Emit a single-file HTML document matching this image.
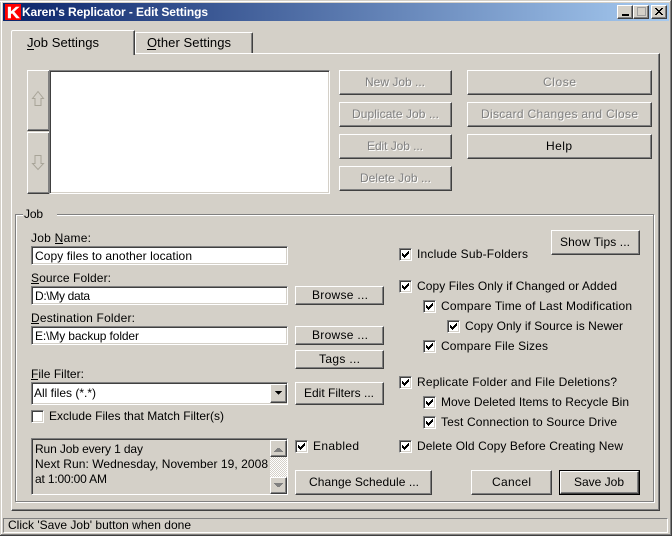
<!DOCTYPE html>
<html><head><meta charset="utf-8"><style>
html,body{margin:0;padding:0;width:672px;height:536px;overflow:hidden;background:#d4d0c8}
svg{display:block;position:absolute;left:0;top:0}
text{font-family:"Liberation Sans",sans-serif;font-size:12px;fill:#000;white-space:pre}
.d{fill:#808080}
.w{fill:#fff}
.b{position:absolute;box-sizing:border-box;background:#d4d0c8;border:1px solid;border-color:#fff #404040 #404040 #fff;box-shadow:inset -1px -1px #808080}
.i{position:absolute;box-sizing:border-box;background:#fff;border:1px solid;border-color:#808080 #fff #fff #808080;box-shadow:inset 1px 1px #404040,inset -1px -1px #d4d0c8}
.c{position:absolute;box-sizing:border-box;width:13px;height:13px;background:#fff;border:1px solid;border-color:#808080 #fff #fff #808080;box-shadow:inset 1px 1px #404040,inset -1px -1px #d4d0c8}
.r{position:absolute}
</style></head><body>
<div class="r" style="left:0;top:1px;width:671px;height:1px;background:#fff"></div>
<div class="r" style="left:1px;top:1px;width:1px;height:534px;background:#fff"></div>
<div class="r" style="left:671px;top:0;width:1px;height:536px;background:#404040"></div>
<div class="r" style="left:670px;top:1px;width:1px;height:534px;background:#808080"></div>
<div class="r" style="left:0;top:535px;width:672px;height:1px;background:#404040"></div>
<div class="r" style="left:1px;top:534px;width:670px;height:1px;background:#808080"></div>
<div class="r" style="left:3px;top:3px;width:666px;height:18px;background:linear-gradient(90deg,#0a246a,#a6caf0)"></div>
<div class="r" style="left:5px;top:4px;width:16px;height:16px;background:#f00"></div>

<div class="r" style="left:11px;top:53px;width:649px;height:458px;box-sizing:border-box;border:1px solid;border-color:#fff #404040 #404040 #fff;box-shadow:inset -1px -1px #808080"></div>
<div class="r" style="left:11px;top:30px;width:124px;height:25px;box-sizing:border-box;background:#d4d0c8;border-left:1px solid #fff;border-top:1px solid #fff;border-right:1px solid #404040;box-shadow:inset -1px 0 #808080;border-top-left-radius:2px"></div>
<div class="r" style="left:135px;top:32px;width:118px;height:21px;box-sizing:border-box;background:#d4d0c8;border-left:1px solid #fff;border-top:1px solid #fff;border-right:1px solid #404040;box-shadow:inset -1px 0 #808080;border-top-right-radius:2px"></div>

<div class="r" style="left:15px;top:214px;width:639px;height:288px;box-sizing:border-box;border:1px solid #808080;box-shadow:inset 1px 1px #fff,1px 1px #fff"></div>
<div class="r" style="left:23px;top:210px;width:34px;height:10px;background:#d4d0c8"></div>

<div class="b" style="left:27px;top:70px;width:23px;height:61px"></div>
<div class="b" style="left:27px;top:132px;width:23px;height:62px"></div>
<div class="i" style="left:49px;top:70px;width:281px;height:124px"></div>

<div class="b" style="left:339px;top:70px;width:113px;height:25px"></div>
<div class="b" style="left:339px;top:102px;width:113px;height:25px"></div>
<div class="b" style="left:339px;top:134px;width:113px;height:25px"></div>
<div class="b" style="left:339px;top:166px;width:113px;height:25px"></div>
<div class="b" style="left:467px;top:70px;width:185px;height:25px"></div>
<div class="b" style="left:467px;top:102px;width:185px;height:25px"></div>
<div class="b" style="left:467px;top:134px;width:185px;height:25px"></div>

<div class="b" style="left:551px;top:230px;width:89px;height:25px"></div>
<div class="i" style="left:31px;top:246px;width:257px;height:19px"></div>
<div class="i" style="left:31px;top:286px;width:257px;height:19px"></div>
<div class="i" style="left:31px;top:326px;width:257px;height:19px"></div>
<div class="i" style="left:31px;top:382px;width:257px;height:23px"></div>
<div class="b" style="left:270px;top:384px;width:17px;height:19px"></div>
<div class="b" style="left:295px;top:286px;width:89px;height:19px"></div>
<div class="b" style="left:295px;top:326px;width:89px;height:19px"></div>
<div class="b" style="left:295px;top:350px;width:89px;height:19px"></div>
<div class="b" style="left:295px;top:382px;width:89px;height:23px"></div>
<div class="b" style="left:295px;top:470px;width:137px;height:25px"></div>
<div class="b" style="left:471px;top:470px;width:81px;height:25px"></div>
<div class="r" style="left:559px;top:470px;width:81px;height:25px;box-sizing:border-box;border:1px solid #000"></div>
<div class="b" style="left:560px;top:471px;width:79px;height:23px"></div>

<div class="i" style="left:31px;top:438px;width:257px;height:57px;background:#d4d0c8"></div>
<div class="r" style="left:270px;top:440px;width:17px;height:53px;background:repeating-conic-gradient(#fff 0 25%,#d4d0c8 0 50%) 0 0/2px 2px"></div>
<div class="b" style="left:270px;top:440px;width:17px;height:17px"></div>
<div class="b" style="left:270px;top:477px;width:17px;height:17px"></div>

<div class="r" style="left:3px;top:518px;width:665px;height:15px;box-sizing:border-box;border:1px solid;border-color:#808080 #fff #fff #808080"></div>

<div class="b" style="left:617px;top:5px;width:16px;height:14px"></div>
<div class="b" style="left:633px;top:5px;width:16px;height:14px"></div>
<div class="b" style="left:651px;top:5px;width:16px;height:14px"></div>

<div class="c" style="left:399px;top:248px"></div>
<div class="c" style="left:399px;top:280px"></div>
<div class="c" style="left:423px;top:300px"></div>
<div class="c" style="left:447px;top:320px"></div>
<div class="c" style="left:423px;top:340px"></div>
<div class="c" style="left:399px;top:376px"></div>
<div class="c" style="left:423px;top:396px"></div>
<div class="c" style="left:423px;top:416px"></div>
<div class="c" style="left:399px;top:440px"></div>
<div class="c" style="left:295px;top:440px"></div>
<div class="c" style="left:31px;top:410px"></div>

<svg width="672" height="536" viewBox="0 0 672 536" xmlns="http://www.w3.org/2000/svg">
<text x="7" y="18" textLength="12.500" lengthAdjust="spacingAndGlyphs" style="font-size:16px;font-weight:bold;fill:#fff;stroke:#fff;stroke-width:.5px">K</text>
<text x="22" y="16" textLength="186" style="font-weight:bold;fill:#fff">Karen's Replicator - Edit Settings</text>

<g shape-rendering="crispEdges">
<path d="M622 14h7v2h-7z" fill="#000"/>
<path d="M637 7h9v1h-9zM637 8h1v8h-1zM645 8h1v8h-1zM637 15h9v1h-9z" fill="#a0a0a0"/>
<path d="M655 8h2v1h1v1h2v-1h1v-1h2v1h-1v1h-1v1h-1v1h1v1h1v1h1v1h-2v-1h-1v-1h-2v1h-1v1h-2v-1h1v-1h1v-1h1v-1h-1v-1h-1v-1h-1z" fill="#000"/>
<path d="M275 391h7l-3.500 4z" fill="#000"/>
<path d="M274 451h9v1h-9zM275 450h7v1h-7zM276 449h5v1h-5zM277 448h3v1h-3z" fill="#808080"/>
<path d="M274 483h9v1h-9zM275 484h7v1h-7zM276 485h5v1h-5zM277 486h3v1h-3z" fill="#808080"/>
</g>
<path d="M38 91.500L43.500 98.500H41V105.500H35V98.500H32.500Z" fill="none" stroke="#a8a498"/>
<path d="M35 155.500H41V163.500H43.500L38 169.500L32.500 163.500H35Z" fill="none" stroke="#a8a498"/>

<g shape-rendering="crispEdges" fill="#000">
<path transform="translate(399 248)" d="M3 5h1v3h-1zM4 6h1v3h-1zM5 7h1v3h-1zM6 6h1v3h-1zM7 5h1v3h-1zM8 4h1v3h-1zM9 3h1v3h-1z"/>
<path transform="translate(399 280)" d="M3 5h1v3h-1zM4 6h1v3h-1zM5 7h1v3h-1zM6 6h1v3h-1zM7 5h1v3h-1zM8 4h1v3h-1zM9 3h1v3h-1z"/>
<path transform="translate(423 300)" d="M3 5h1v3h-1zM4 6h1v3h-1zM5 7h1v3h-1zM6 6h1v3h-1zM7 5h1v3h-1zM8 4h1v3h-1zM9 3h1v3h-1z"/>
<path transform="translate(447 320)" d="M3 5h1v3h-1zM4 6h1v3h-1zM5 7h1v3h-1zM6 6h1v3h-1zM7 5h1v3h-1zM8 4h1v3h-1zM9 3h1v3h-1z"/>
<path transform="translate(423 340)" d="M3 5h1v3h-1zM4 6h1v3h-1zM5 7h1v3h-1zM6 6h1v3h-1zM7 5h1v3h-1zM8 4h1v3h-1zM9 3h1v3h-1z"/>
<path transform="translate(399 376)" d="M3 5h1v3h-1zM4 6h1v3h-1zM5 7h1v3h-1zM6 6h1v3h-1zM7 5h1v3h-1zM8 4h1v3h-1zM9 3h1v3h-1z"/>
<path transform="translate(423 396)" d="M3 5h1v3h-1zM4 6h1v3h-1zM5 7h1v3h-1zM6 6h1v3h-1zM7 5h1v3h-1zM8 4h1v3h-1zM9 3h1v3h-1z"/>
<path transform="translate(423 416)" d="M3 5h1v3h-1zM4 6h1v3h-1zM5 7h1v3h-1zM6 6h1v3h-1zM7 5h1v3h-1zM8 4h1v3h-1zM9 3h1v3h-1z"/>
<path transform="translate(399 440)" d="M3 5h1v3h-1zM4 6h1v3h-1zM5 7h1v3h-1zM6 6h1v3h-1zM7 5h1v3h-1zM8 4h1v3h-1zM9 3h1v3h-1z"/>
<path transform="translate(295 440)" d="M3 5h1v3h-1zM4 6h1v3h-1zM5 7h1v3h-1zM6 6h1v3h-1zM7 5h1v3h-1zM8 4h1v3h-1zM9 3h1v3h-1z"/>
<path d="M27 49h7v1h-7zM147 49h9v1h-9zM55 243h8v1h-8zM31 283h8v1h-8zM31 323h8v1h-8zM31 379h7v1h-7z"/>
</g>

<text x="27" y="47" textLength="72" style="font-size:13px">Job Settings</text>
<text x="147" y="47" textLength="84" style="font-size:13px">Other Settings</text>

<g class="w">
<text class="w" x="366" y="87" textLength="60">New Job ...</text>
<text class="w" x="353" y="119" textLength="87">Duplicate Job ...</text>
<text class="w" x="368" y="151" textLength="56">Edit Job ...</text>
<text class="w" x="361" y="183" textLength="71">Delete Job ...</text>
<text class="w" x="544" y="87" textLength="33">Close</text>
<text class="w" x="482" y="119" textLength="157">Discard Changes and Close</text>
</g>
<text class="d" x="365" y="86" textLength="60">New Job ...</text>
<text class="d" x="352" y="118" textLength="87">Duplicate Job ...</text>
<text class="d" x="367" y="150" textLength="56">Edit Job ...</text>
<text class="d" x="360" y="182" textLength="71">Delete Job ...</text>
<text class="d" x="543" y="86" textLength="33">Close</text>
<text class="d" x="481" y="118" textLength="157">Discard Changes and Close</text>
<text x="546" y="150" textLength="26">Help</text>

<text x="24" y="218" textLength="19">Job</text>
<text x="31" y="242" textLength="60">Job Name:</text>
<text x="35" y="260" textLength="157">Copy files to another location</text>
<text x="31" y="282" textLength="80">Source Folder:</text>
<text x="35" y="300" textLength="55">D:\My data</text>
<text x="31" y="322" textLength="104">Destination Folder:</text>
<text x="35" y="340" textLength="104">E:\My backup folder</text>
<text x="31" y="378" textLength="53">File Filter:</text>
<text x="34" y="397" textLength="62">All files (*.*)</text>
<text x="49" y="420" textLength="175">Exclude Files that Match Filter(s)</text>
<text x="35" y="453" textLength="108">Run Job every 1 day</text>
<text x="35" y="468" textLength="233">Next Run: Wednesday, November 19, 2008</text>
<text x="35" y="483" textLength="72">at 1:00:00 AM</text>
<text x="8" y="529" textLength="183">Click 'Save Job' button when done</text>

<text x="312" y="299" textLength="56">Browse ...</text>
<text x="312" y="339" textLength="56">Browse ...</text>
<text x="319" y="363" textLength="41">Tags ...</text>
<text x="304" y="397" textLength="70">Edit Filters ...</text>
<text x="560" y="246" textLength="70">Show Tips ...</text>

<text x="417" y="258" textLength="111">Include Sub-Folders</text>
<text x="417" y="290" textLength="200">Copy Files Only if Changed or Added</text>
<text x="441" y="310" textLength="191">Compare Time of Last Modification</text>
<text x="465" y="330" textLength="158">Copy Only if Source is Newer</text>
<text x="441" y="350" textLength="107">Compare File Sizes</text>
<text x="417" y="386" textLength="200">Replicate Folder and File Deletions?</text>
<text x="441" y="406" textLength="188">Move Deleted Items to Recycle Bin</text>
<text x="441" y="426" textLength="176">Test Connection to Source Drive</text>
<text x="417" y="450" textLength="206">Delete Old Copy Before Creating New</text>
<text x="313" y="450" textLength="46">Enabled</text>
<text x="309" y="486" textLength="110">Change Schedule ...</text>
<text x="492" y="486" textLength="39">Cancel</text>
<text x="574" y="486" textLength="50">Save Job</text>
</svg>
</body></html>
